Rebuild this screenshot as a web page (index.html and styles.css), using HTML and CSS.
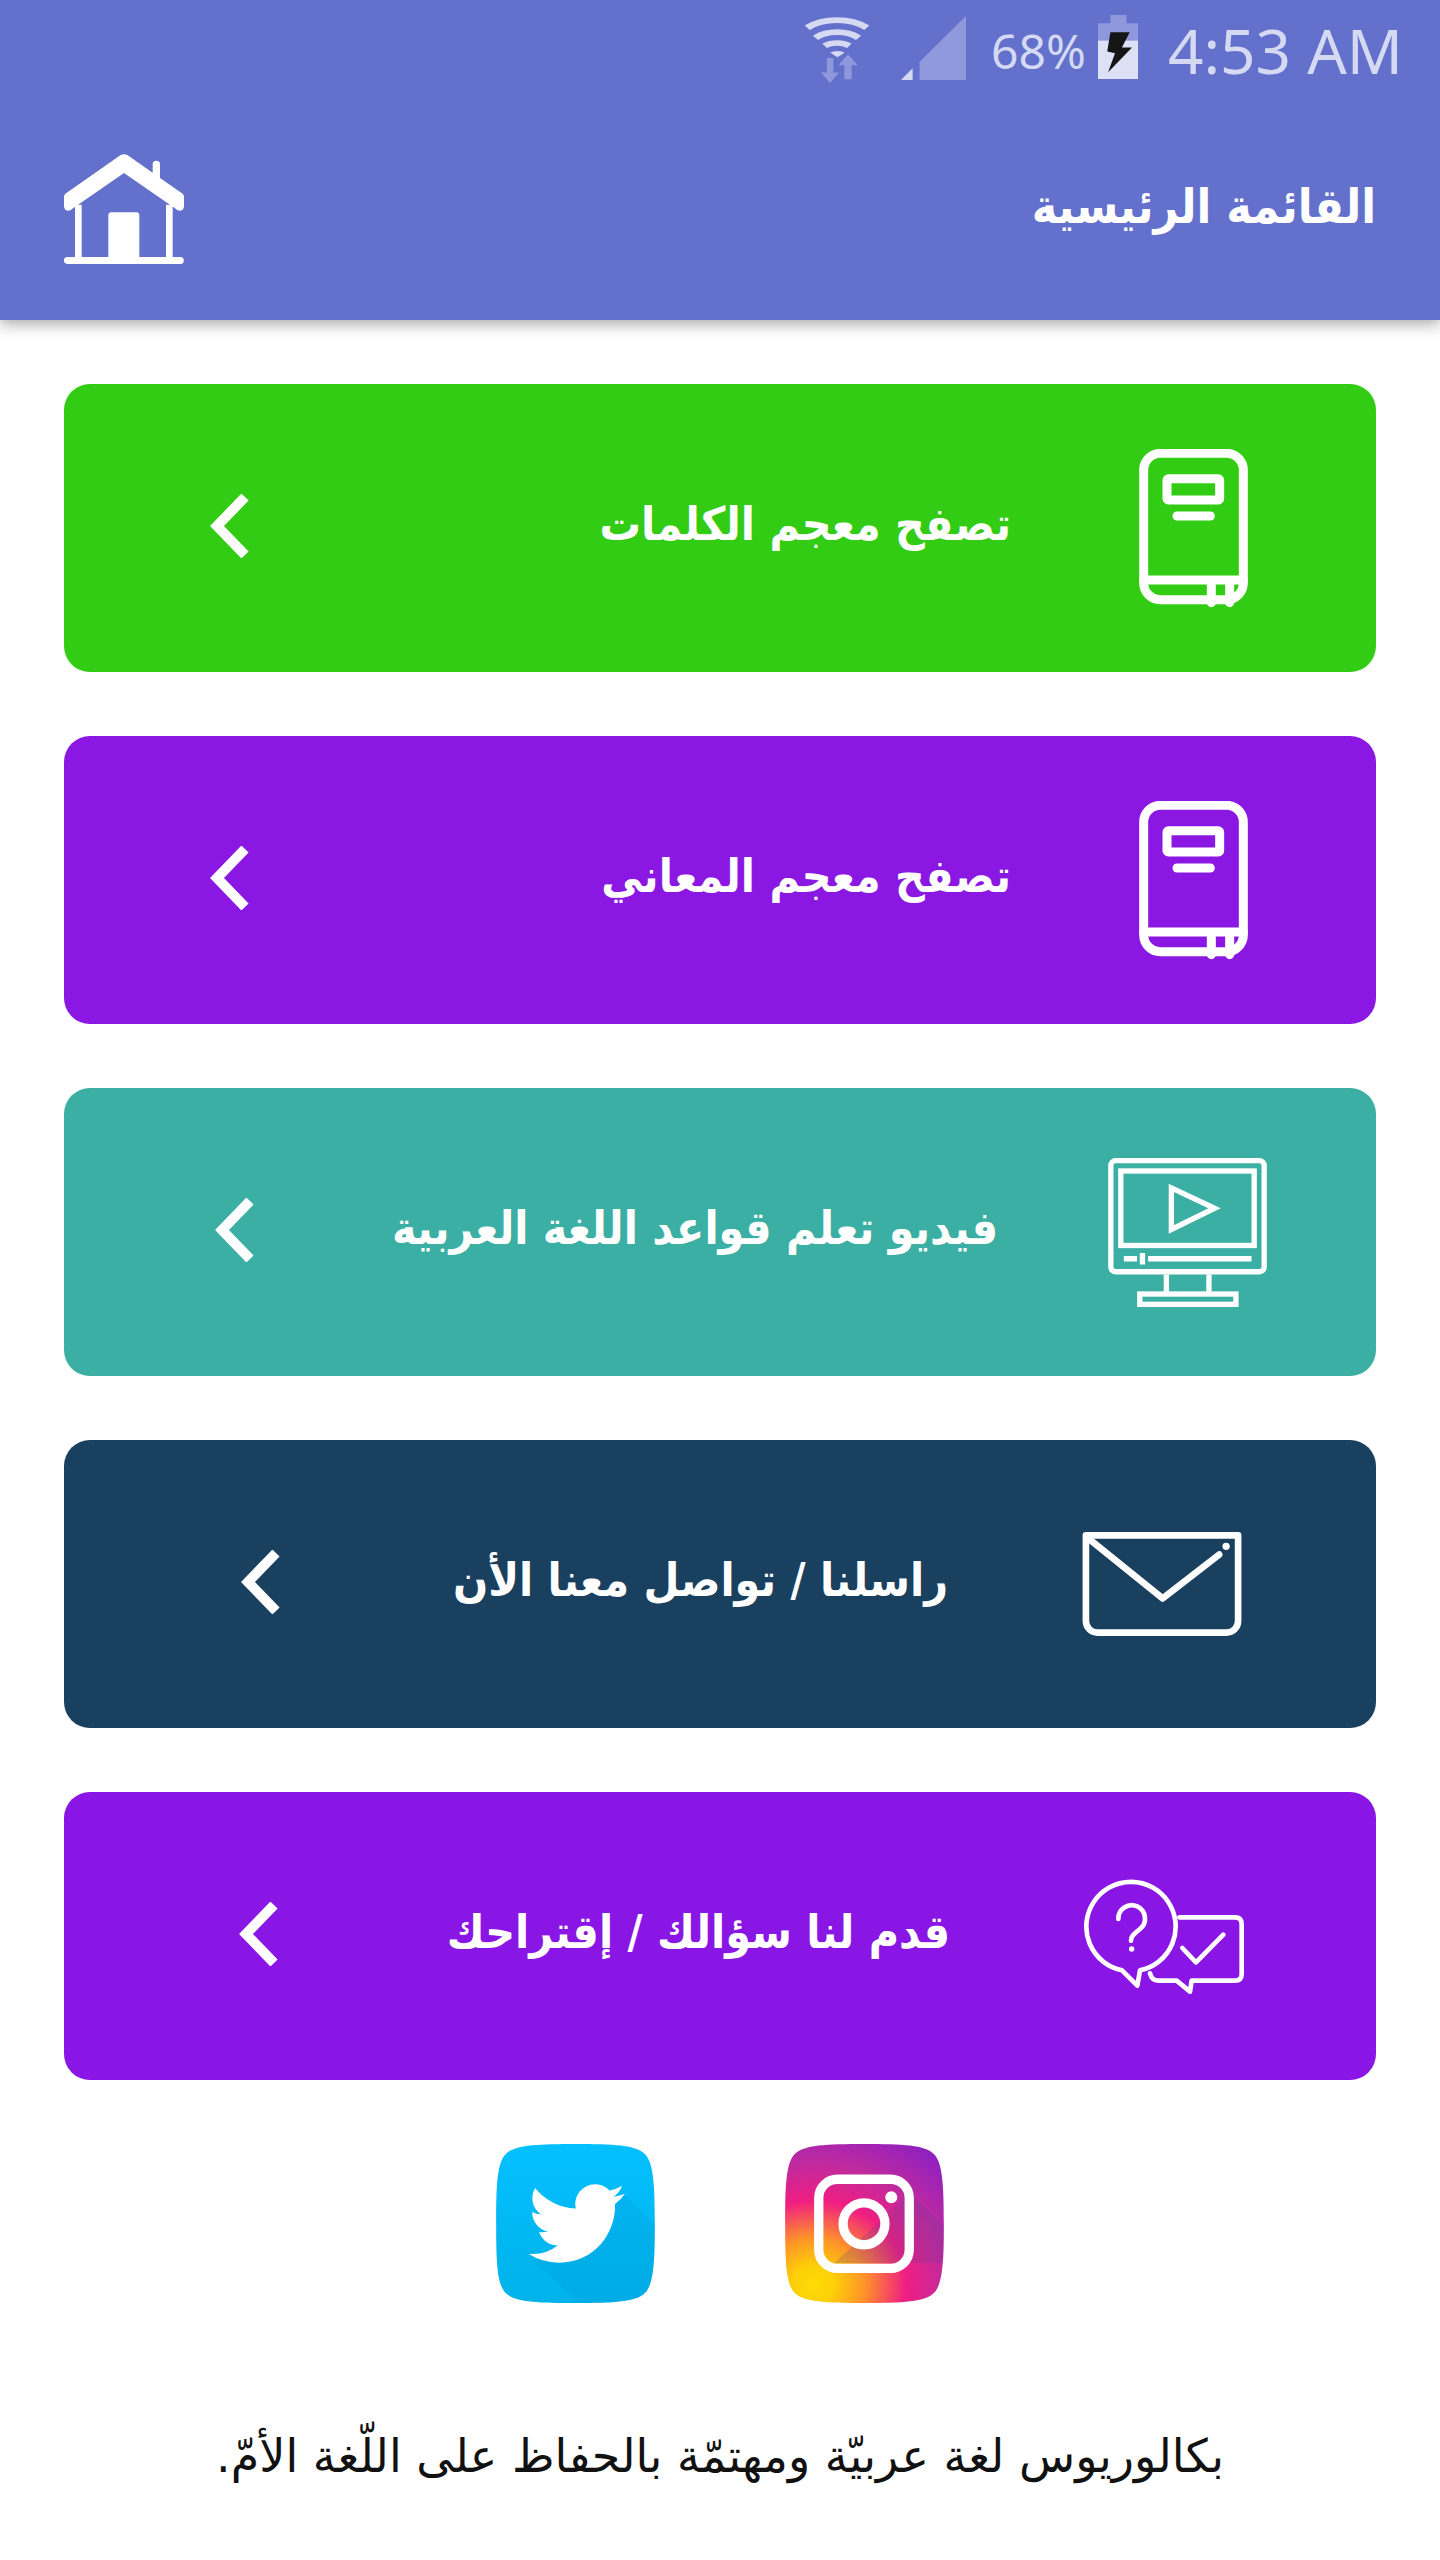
FILE: index.html
```html
<!DOCTYPE html>
<html lang="ar" dir="rtl">
<head>
<meta charset="utf-8">
<title>القائمة الرئيسية</title>
<link rel="stylesheet" href="styles.css">
</head>
<body>
<header class="header">
  <div class="status" dir="ltr">
    <svg class="st-wifi" viewBox="183 38 144 209" preserveAspectRatio="none">
      <g fill="none" stroke="#d5daf2" stroke-width="17">
        <path d="M190 82a88 70 0 0 1 130 0"/>
        <path d="M208 112a64 52 0 0 1 94 0"/>
        <path d="M228 136a40 32 0 0 1 54 0"/>
      </g>
      <path d="M240 156a24 18 0 0 1 32 0l-16 14z" fill="#d5daf2"/>
      <path d="M233 172h14v44h12l-19 31-20-31h13zM271 236v-42h-13l21-32 21 32h-13v42z" fill="#8f98dd"/>
    </svg>
    <svg class="st-signal" viewBox="395 48 140 192" preserveAspectRatio="none">
      <path d="M535 48 435 185v55h100z" fill="#9199dd"/>
      <path d="M395 240l25-35v35z" fill="#d5daf2"/>
    </svg>
    <span class="st-pct">68%</span>
    <svg class="st-batt" viewBox="823 45 87 193" preserveAspectRatio="none">
      <path d="M850 45h35v25h25v52h-87V70h27z" fill="#8f98dd"/>
      <path d="M823 122h87v116h-87z" fill="#dde1f6"/>
      <path d="M850 97h42l-17 46h22l-52 75 15-58-17-5z" fill="#151515"/>
    </svg>
    <span class="st-time">4:53 AM</span>
  </div>
  <div class="appbar">
    <h1 class="title">القائمة الرئيسية</h1>
    <svg class="home" viewBox="192 128 360 330">
      <g fill="#fff">
        <path d="M361 132q11-6 22 0l75 52v-25a11 11 0 0 1 22 0v41l68 47q4 4 4 11v27a13 13 0 0 1-13 13q-9 0-14-7L372 185 219 291q-5 7-14 7a13 13 0 0 1-13-13v-27q0-7 4-11z"/>
        <path d="M225 280h20v157h80V312q0-9 9-9h75q9 0 9 9v125h80V280h20v157h23a10.500 10.500 0 0 1 0 21H202a10.500 10.500 0 0 1 0-21h23z"/>
      </g>
    </svg>
  </div>
</header>

<main class="menu">
  <a class="card green card-a">
    <svg class="ico ico-book" viewBox="178 85 327 477">
      <g fill="none" stroke="#fff" stroke-width="27" stroke-linecap="round">
        <rect x="192" y="98" width="299" height="439" rx="50"/>
        <path d="M192 478h299M395 478v68M450 478v68"/>
        <rect x="262" y="174" width="158" height="64" rx="4"/>
        <path d="M292 286h100"/>
      </g>
    </svg>
    <span class="label">تصفح معجم الكلمات</span>
    <svg class="chev" viewBox="0 0 42 64"><path d="M36 3 8 32l28 29" fill="none" stroke="#fff" stroke-width="10"/></svg>
  </a>
  <a class="card purple card-a">
    <svg class="ico ico-book" viewBox="178 85 327 477">
      <g fill="none" stroke="#fff" stroke-width="27" stroke-linecap="round">
        <rect x="192" y="98" width="299" height="439" rx="50"/>
        <path d="M192 478h299M395 478v68M450 478v68"/>
        <rect x="262" y="174" width="158" height="64" rx="4"/>
        <path d="M292 286h100"/>
      </g>
    </svg>
    <span class="label">تصفح معجم المعاني</span>
    <svg class="chev" viewBox="0 0 42 64"><path d="M36 3 8 32l28 29" fill="none" stroke="#fff" stroke-width="10"/></svg>
  </a>
  <a class="card teal card-b">
    <svg class="ico ico-video" viewBox="85 82 477 448">
      <g fill="none" stroke="#fff" stroke-width="16">
        <rect x="93" y="90" width="461" height="334" rx="14"/>
        <rect x="123" y="121" width="401" height="224"/>
        <path d="M275 172l130 61-130 64zM132 385h40M205 385h311M188 368v34M260 432v52M388 432v52"/>
        <rect x="180" y="491" width="289" height="31"/>
      </g>
    </svg>
    <span class="label">فيديو تعلم قواعد اللغة العربية</span>
    <svg class="chev" viewBox="0 0 42 64"><path d="M36 3 8 32l28 29" fill="none" stroke="#fff" stroke-width="10"/></svg>
  </a>
  <a class="card navy card-c">
    <svg class="ico ico-mail" viewBox="67 65 478 313">
      <g fill="none" stroke="#fff" stroke-width="20" stroke-linecap="round" stroke-linejoin="round">
        <path d="M77 75h458v258a35 35 0 0 1-35 35H112a35 35 0 0 1-35-35z"/>
        <path d="M85 85l223 180 170-132"/>
      </g>
      <circle cx="499" cy="108" r="11" fill="#fff"/>
    </svg>
    <span class="label">راسلنا / تواصل معنا الأن</span>
    <svg class="chev" viewBox="0 0 42 64"><path d="M36 3 8 32l28 29" fill="none" stroke="#fff" stroke-width="10"/></svg>
  </a>
  <a class="card violet card-d">
    <svg class="ico ico-chat" viewBox="72 55 480 345">
      <g fill="none" stroke="#fff" stroke-width="14" stroke-linecap="round" stroke-linejoin="round">
        <path d="M186 329A134 134 0 1 1 240 329l-8 46z"/>
        <path d="M358 170h167q20 0 20 20v150q0 20-20 20H395l-5 33-40-33h-55q-20 0-25-22"/>
        <path d="M367 262l41 43 82-83"/>
        <path d="M175 175a40 40 0 1 1 65 30c-25 20-27 25-27 35"/>
      </g>
      <circle cx="215" cy="265" r="8" fill="#fff"/>
    </svg>
    <span class="label">قدم لنا سؤالك / إقتراحك</span>
    <svg class="chev" viewBox="0 0 42 64"><path d="M36 3 8 32l28 29" fill="none" stroke="#fff" stroke-width="10"/></svg>
  </a>
</main>

<section class="social" dir="ltr">
  <svg class="soc" viewBox="48 42 477 478">
    <defs>
      <linearGradient id="tw" x1="0" y1="0" x2="0" y2="1">
        <stop offset="0" stop-color="#04c0ff"/>
        <stop offset="1" stop-color="#00b2ea"/>
      </linearGradient>
    </defs>
    <path d="M286 42C400 42 470 45 495 72 522 98 525 170 525 281 525 392 522 465 495 490 470 517 400 520 286 520 172 520 102 517 77 490 50 465 48 392 48 281 48 170 50 98 77 72 102 45 172 42 286 42Z" fill="url(#tw)"/>
    <path d="M430 190 524 285C525 392 522 465 495 490 470 517 400 520 300 520L160 395 300 300Z" fill="#0096d0" opacity=".22"/>
    <path transform="translate(145 136) scale(12.08)" d="M23.953 4.57a10 10 0 01-2.825.775 4.958 4.958 0 002.163-2.723c-.951.555-2.005.959-3.127 1.184a4.92 4.92 0 00-8.384 4.482C7.69 8.095 4.067 6.13 1.64 3.162a4.822 4.822 0 00-.666 2.475c0 1.71.87 3.213 2.188 4.096a4.904 4.904 0 01-2.228-.616v.06a4.923 4.923 0 003.946 4.827 4.996 4.996 0 01-2.212.085 4.936 4.936 0 004.604 3.417 9.867 9.867 0 01-6.102 2.105c-.39 0-.779-.023-1.17-.067a13.995 13.995 0 007.557 2.209c9.053 0 13.998-7.496 13.998-13.985 0-.21 0-.42-.015-.63A9.935 9.935 0 0024 4.59z" fill="#fff"/>
  </svg>
  <svg class="soc" viewBox="915 42 477 478">
    <defs>
      <radialGradient id="ig" gradientUnits="userSpaceOnUse" cx="1000" cy="465" r="560" gradientTransform="translate(1000 465) scale(1.1 1) translate(-1000 -465)">
        <stop offset="0" stop-color="#fddc05"/>
        <stop offset=".1" stop-color="#fdd008"/>
        <stop offset=".25" stop-color="#ff9428"/>
        <stop offset=".45" stop-color="#f01e82"/>
        <stop offset=".65" stop-color="#c02a9e"/>
        <stop offset="1" stop-color="#7d1ccc"/>
      </radialGradient>
    </defs>
    <path d="M1153 42C1267 42 1337 45 1362 72 1389 98 1392 170 1392 281 1392 392 1389 465 1362 490 1337 517 1267 520 1153 520 1039 520 969 517 944 490 917 465 915 392 915 281 915 170 917 98 944 72 969 45 1039 42 1153 42Z" fill="url(#ig)"/>
    <path d="M1290 190 1390 285C1392 340 1391 375 1389 400L1060 400 1040 420Z" fill="#5a3a90" opacity=".2"/>
    <g fill="none" stroke="#fff" stroke-width="28">
      <rect x="1016" y="148" width="272" height="268" rx="56"/>
      <circle cx="1152" cy="282" r="63"/>
    </g>
    <circle cx="1234" cy="202" r="18" fill="#fff"/>
  </svg>
</section>

<footer class="foot">بكالوريوس لغة عربيّة ومهتمّة بالحفاظ على اللّغة الأمّ.</footer>
</body>
</html>
```

FILE: styles.css
```css
* { box-sizing: border-box; }
html, body { margin: 0; padding: 0; background: #fff; }
body { font-family: "DejaVu Sans", "Noto Sans", sans-serif; color: #111; }

.header { height: 320px; background: #6371cc; box-shadow: 0 4px 14px rgba(0,0,0,.35); position: relative; }
.status { height: 110px; display: flex; align-items: flex-start; justify-content: flex-end; padding-right: 40px; color: #d5daf2; font-family: "Noto Sans", Roboto, sans-serif; }
.st-wifi { width: 66px; height: 70px; margin-top: 13px; }
.st-signal { width: 65px; height: 64px; margin: 16px 0 0 31px; }
.st-pct { font-size: 48px; line-height: 60px; margin: 21px 0 0 25px; width: 94px; white-space: nowrap; }
.st-batt { width: 40px; height: 64px; margin: 15px 0 0 13px; }
.st-time { font-size: 62px; line-height: 70px; margin: 15px 0 0 30px; width: 232px; white-space: nowrap; }

.appbar { height: 210px; display: flex; align-items: center; justify-content: space-between; padding: 0 64px 13px; }
.title { margin: 0 0 3px; font-family: "DejaVu Sans Condensed", "DejaVu Sans", sans-serif; font-stretch: condensed; font-size: 48px; font-weight: 700; color: #fff; line-height: 1.2; }
.home { width: 120px; height: 110px; display: block; }

.menu { display: flex; flex-direction: column; gap: 64px; padding: 64px 64px 0; }
.card { height: 288px; border-radius: 26px; display: flex; align-items: center; color: #fff; }
.green { background: #33cc14; }
.purple { background: #8b18e2; }
.teal { background: #3bafa3; }
.navy { background: #1a4060; }
.violet { background: #8916e4; }
.card-a { padding: 0 128px 0 145px; gap: 128px; }
.card-b { padding: 0 109px 0 150px; gap: 110px; }
.card-c { padding: 0 134px 0 176px; gap: 134px; }
.card-d { padding: 0 132px 0 174px; gap: 134px; }
.label { flex: 1; min-width: 0; padding-bottom: 6px; font-family: "DejaVu Sans Condensed", "DejaVu Sans", sans-serif; font-stretch: condensed; font-size: 46px; font-weight: 700; line-height: 1.2; white-space: nowrap; }
.ico { display: block; flex: none; }
.ico-book { width: 109px; height: 159px; }
.ico-video { width: 159px; height: 149px; }
.ico-mail { width: 160px; height: 104px; }
.ico-chat { width: 160px; height: 115px; }
.chev { width: 42px; height: 64px; flex: none; display: block; margin-bottom: 4px; }

.social { display: flex; justify-content: center; gap: 130px; margin-top: 64px; }
.soc { width: 159px; height: 159px; display: block; }
.foot { margin-top: 124px; text-align: center; font-size: 46px; line-height: 1.3; color: #111; }
```
